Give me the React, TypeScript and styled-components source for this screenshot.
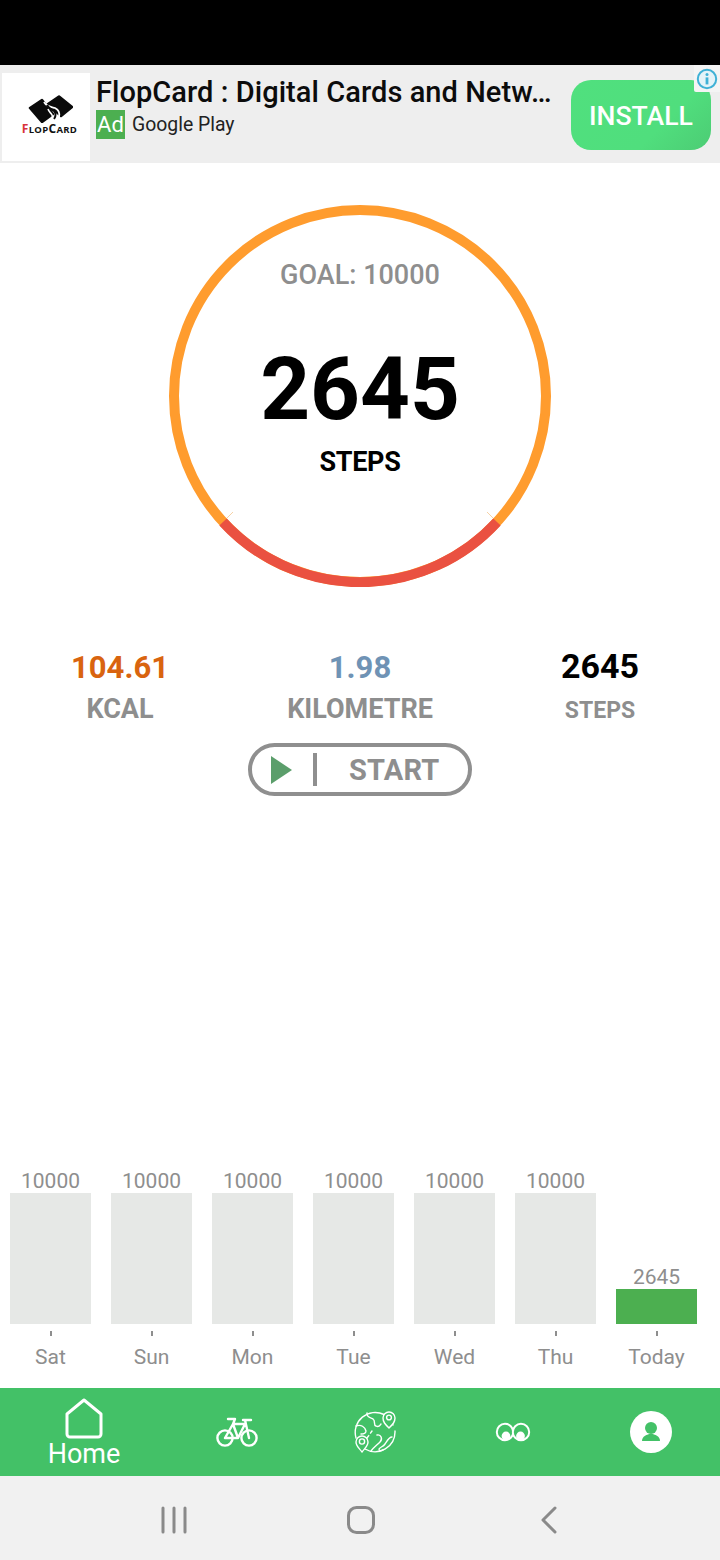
import React from "react";
import styled, { createGlobalStyle } from "styled-components";

const Global = createGlobalStyle`
  html, body { margin: 0; padding: 0; background: #fff; }
  * { box-sizing: border-box; }
  body { font-family: Roboto, "Liberation Sans", sans-serif; }
`;

const Screen = styled.div`
  width: 720px;
  height: 1560px;
  display: flex;
  flex-direction: column;
  overflow: hidden;
  background: #fff;
`;

const StatusBar = styled.div`
  height: 65px;
  flex: none;
  background: #000;
`;

const AdBanner = styled.div`
  position: relative;
  height: 98px;
  flex: none;
  display: flex;
  align-items: flex-start;
  background: #eeeeee;
  padding: 8px 9px 0 2px;
`;

const AdLogo = styled.div`
  width: 88px;
  height: 88px;
  flex: none;
  background: #fff;
  display: flex;
  flex-direction: column;
  align-items: center;
  padding: 22px 0 0 7px;
`;

const LogoWord = styled.div`
  font-family: "Open Sans", "Liberation Sans", sans-serif;
  font-weight: 700;
  font-size: 12px;
  line-height: 12px;
  letter-spacing: 0.3px;
  color: #111;
  margin-top: 0;
  white-space: nowrap;
  small { font-size: 9.5px; }
  b { color: #d8323c; font-weight: 700; }
`;

const AdText = styled.div`
  width: 475px;
  flex: none;
  padding-left: 6px;
`;

const AdTitle = styled.div`
  font-size: 29px;
  font-weight: 500;
  line-height: 38px;
  letter-spacing: 0.06px;
  color: #0c0c0c;
  white-space: nowrap;
`;

const AdMeta = styled.div`
  display: flex;
  align-items: center;
  margin-top: -1px;
  gap: 7px;
`;

const AdBadge = styled.span`
  width: 29px;
  height: 29px;
  background: #4caf50;
  color: #fff;
  font-size: 22px;
  line-height: 29px;
  text-align: center;
`;

const AdSource = styled.span`
  font-size: 19.4px;
  line-height: 29px;
  color: #222;
`;

const InstallButton = styled.div`
  width: 140px;
  height: 70px;
  margin-top: 7px;
  margin-left: auto;
  border-radius: 20px;
  background: linear-gradient(135deg, #50e07e 0%, #50de7d 65%, #4ccc74 100%);
  color: #fff;
  font-size: 26.6px;
  font-weight: 500;
  line-height: 72px;
  text-align: center;
`;

const InfoCorner = styled.div`
  position: absolute;
  top: 0;
  right: 0;
  width: 26px;
  height: 27px;
  background: #f4f4f4;
  border-bottom-left-radius: 2px;
  display: flex;
  align-items: center;
  justify-content: center;
`;

const RingWrap = styled.div`
  position: relative;
  width: 382px;
  height: 382px;
  flex: none;
  margin: 42px auto 0;
  display: flex;
  flex-direction: column;
  align-items: center;
`;

const RingArt = styled.svg`
  position: absolute;
  inset: 0;
`;

const GoalLabel = styled.div`
  margin-top: 54px;
  font-size: 27px;
  line-height: 32px;
  font-weight: 500;
  color: #8e8e8e;
`;

const StepCount = styled.div`
  margin-top: 46px;
  font-size: 87px;
  line-height: 104px;
  font-weight: 700;
  color: #000;
`;

const StepUnit = styled.div`
  margin-top: 5px;
  font-size: 27px;
  line-height: 32px;
  font-weight: 700;
  letter-spacing: -0.3px;
  color: #000;
`;

const Stats = styled.div`
  display: grid;
  grid-template-columns: repeat(3, 240px);
  margin-top: 60px;
  flex: none;
`;

const Stat = styled.div`
  display: flex;
  flex-direction: column;
  align-items: center;
`;

const StatValue = styled.div<{ $color: string; $size: number; $box: number; $line: number }>`
  height: ${(p) => p.$box}px;
  font-size: ${(p) => p.$size}px;
  line-height: ${(p) => p.$line}px;
  font-weight: 700;
  color: ${(p) => p.$color};
`;

const StatLabel = styled.div<{ $size: number }>`
  height: 42px;
  font-size: ${(p) => p.$size}px;
  line-height: 42px;
  font-weight: 700;
  color: #8e8e8e;
`;

const StartButton = styled.div`
  width: 224px;
  height: 53px;
  flex: none;
  margin: 11px auto 0;
  border: 4px solid #8f8f8f;
  border-radius: 27px;
  display: flex;
  align-items: center;
  padding-left: 19px;
`;

const PlayIcon = styled.svg`
  width: 22px;
  height: 30px;
  flex: none;
`;

const Divider = styled.span`
  width: 4px;
  height: 33px;
  margin-left: 20px;
  flex: none;
  background: #8f8f8f;
`;

const StartLabel = styled.span`
  margin-left: 32px;
  font-size: 29px;
  font-weight: 700;
  color: #8e8e8e;
  letter-spacing: 0.2px;
`;

const Chart = styled.div`
  margin-top: auto;
  height: 224px;
  flex: none;
  display: grid;
  grid-template-columns: repeat(7, 81px);
  column-gap: 20px;
  padding-left: 10px;
`;

const Day = styled.div`
  display: flex;
  flex-direction: column;
  align-items: center;
`;

const Plot = styled.div`
  height: 160px;
  width: 100%;
  display: flex;
  flex-direction: column;
  justify-content: flex-end;
  align-items: center;
`;

const BarValue = styled.div`
  font-size: 21px;
  line-height: 26px;
  color: #8e8e8e;
  position: relative;
  top: 1px;
`;

const Bar = styled.div<{ $color: string }>`
  width: 100%;
  background: ${(p) => p.$color};
`;

const Tick = styled.span`
  width: 2px;
  height: 5px;
  margin-top: 7px;
  background: #8e8e8e;
`;

const DayLabel = styled.div`
  margin-top: 7px;
  font-size: 21px;
  line-height: 28px;
  color: #8e8e8e;
`;

const TabBar = styled.div`
  height: 88px;
  flex: none;
  background: #43c167;
  display: grid;
  grid-template-columns: 168px repeat(4, 138px);
`;

const Tab = styled.div`
  display: flex;
  flex-direction: column;
  align-items: center;
  justify-content: center;
  color: #fff;
`;

const HomeTab = styled(Tab)`
  justify-content: flex-start;
  padding-top: 10px;
`;

const TabLabel = styled.div`
  font-size: 27px;
  line-height: 30px;
  color: #fff;
`;

const SystemNav = styled.div`
  height: 84px;
  flex: none;
  background: #f1f1f1;
  display: grid;
  grid-template-columns: repeat(3, 187.5px);
  padding: 4px 0 0 80px;
  align-items: center;
  justify-items: center;
`;

const days = [
  { day: "Sat", value: 10000 },
  { day: "Sun", value: 10000 },
  { day: "Mon", value: 10000 },
  { day: "Tue", value: 10000 },
  { day: "Wed", value: 10000 },
  { day: "Thu", value: 10000 },
  { day: "Today", value: 2645 },
];

export default function App() {
  return (
    <Screen>
      <Global />
      <StatusBar />

      <AdBanner>
        <AdLogo>
          <svg width="46" height="28" viewBox="0 0 46 28">
            <path d="M3 13 L15 5 L26 19 L15 27 Z" fill="#0b0b0b" stroke="#0b0b0b" strokeWidth="2.5" strokeLinejoin="round" />
            <path d="M21 9 L32 1.5 L45 12 L34 21 Z" fill="#0b0b0b" stroke="#0b0b0b" strokeWidth="2.5" strokeLinejoin="round" />
            <path d="M17 7 C20 12 24 12 28 13 C32 15 33 18 32 22" fill="none" stroke="#fff" strokeWidth="1.8" />
            <path d="M20 10 C22 14 25 15 27 16 C29 18 29 21 27 24" fill="none" stroke="#0b0b0b" strokeWidth="2" />
            <path d="M21 14 C22 17 24 18 25 20 C26 22 25 25 23 27" fill="none" stroke="#fff" strokeWidth="1.6" />
          </svg>
          <LogoWord>
            <b>F</b>
            <small>LOP</small>C<small>ARD</small>
          </LogoWord>
        </AdLogo>
        <AdText>
          <AdTitle>FlopCard : Digital Cards and Netw…</AdTitle>
          <AdMeta>
            <AdBadge>Ad</AdBadge>
            <AdSource>Google Play</AdSource>
          </AdMeta>
        </AdText>
        <InstallButton>INSTALL</InstallButton>
        <InfoCorner>
          <svg width="22" height="22" viewBox="0 0 22 22">
            <circle cx="11" cy="11" r="9.2" fill="#e4f3f8" stroke="#3fb1d6" strokeWidth="2" />
            <circle cx="11" cy="6.6" r="1.5" fill="#3fb1d6" />
            <rect x="9.6" y="9.4" width="2.8" height="7" fill="#3fb1d6" />
          </svg>
        </InfoCorner>
      </AdBanner>

      <RingWrap>
        <RingArt width="382" height="382" viewBox="0 0 382 382">
          <circle cx="191" cy="191" r="186" fill="none" stroke="#ff9c2e" strokeWidth="10" />
          <path d="M 54 317 A 186 186 0 0 0 328 317" fill="none" stroke="#ea5141" strokeWidth="10" />
          <path d="M 58 313 L 64 307 M 324 313 L 318 307" stroke="#f6d2a6" strokeWidth="1" />
        </RingArt>
        <GoalLabel>GOAL: 10000</GoalLabel>
        <StepCount>2645</StepCount>
        <StepUnit>STEPS</StepUnit>
      </RingWrap>

      <Stats>
        <Stat>
          <StatValue $color="#d9640f" $size={31} $box={41} $line={42}>104.61</StatValue>
          <StatLabel $size={27}>KCAL</StatLabel>
        </Stat>
        <Stat>
          <StatValue $color="#6f93b5" $size={31} $box={41} $line={42}>1.98</StatValue>
          <StatLabel $size={27}>KILOMETRE</StatLabel>
        </Stat>
        <Stat>
          <StatValue $color="#000" $size={34} $box={43} $line={38}>2645</StatValue>
          <StatLabel $size={23}>STEPS</StatLabel>
        </Stat>
      </Stats>

      <StartButton>
        <PlayIcon viewBox="0 0 22 30">
          <path d="M0 1 L21 15 L0 29 Z" fill="#5b9e6b" />
        </PlayIcon>
        <Divider />
        <StartLabel>START</StartLabel>
      </StartButton>

      <Chart>
        {days.map((d) => (
          <Day key={d.day}>
            <Plot>
              <BarValue>{d.value}</BarValue>
              <Bar
                $color={d.value >= 10000 ? "#e6e8e6" : "#4caf50"}
                style={{ height: d.value >= 10000 ? 131 : 35 }}
              />
            </Plot>
            <Tick />
            <DayLabel>{d.day}</DayLabel>
          </Day>
        ))}
      </Chart>

      <TabBar>
        <HomeTab>
          <svg width="38" height="41" viewBox="0 0 38 41">
            <path
              d="M19 2 L36 16 V36 a3 3 0 0 1 -3 3 H5 a3 3 0 0 1 -3 -3 V16 Z"
              fill="none"
              stroke="#fff"
              strokeWidth="3"
              strokeLinejoin="round"
            />
          </svg>
          <TabLabel>Home</TabLabel>
        </HomeTab>
        <Tab>
          <svg width="44" height="32" viewBox="0 0 44 32" fill="none" stroke="#fff" strokeWidth="2.4" strokeLinecap="round" strokeLinejoin="round">
            <circle cx="10" cy="22" r="7.6" />
            <circle cx="34" cy="22" r="7.6" />
            <path d="M10 22 L18 8 L23 22 H10 M18 8 H30 L23 22 M13 3 H20 L18 8 M28 4 H36 M30 4 L34 22" />
          </svg>
        </Tab>
        <Tab>
          <svg width="44" height="44" viewBox="0 0 44 44" fill="none" stroke="#fff" strokeWidth="1.4" strokeLinecap="round" strokeLinejoin="round">
            <path d="M31 4.5 A20 20 0 0 1 40 15 M42 21 A20 20 0 0 1 12 39 M3 28 A20 20 0 0 1 31 4.5" />
            <path d="M14 3 C13 7 18 8 20 9 C23 11 20 15 23 16 C26 18 27 15 28 14" />
            <path d="M3 16 C8 14 12 17 13 21 C13 24 10 24 8 24" />
            <path d="M24 25 C28 24 30 29 27 32 C24 35 21 37 18 41" />
            <path d="M39 27 C36 27 34 31 32 34 C30 37 27 37 26 39 C26 41 28 41 30 40" />
            <path d="M14 28 L19 21" strokeDasharray="3 3" />
            <path d="M36 18 C32 14 30 12 30 8 A6 6 0 0 1 42 8 C42 12 40 14 36 18 Z" fill="#43c167" />
            <circle cx="36" cy="7.5" r="2.4" />
            <path d="M9 42 C6 38 3 36 3 32 A6 6 0 0 1 15 32 C15 36 12 38 9 42 Z" fill="#43c167" />
            <circle cx="9" cy="31.5" r="2.6" />
          </svg>
        </Tab>
        <Tab>
          <svg width="36" height="22" viewBox="0 0 36 22">
            <circle cx="10" cy="11" r="8.2" fill="none" stroke="#fff" strokeWidth="2" />
            <circle cx="26" cy="11" r="8.2" fill="#43c167" stroke="#fff" strokeWidth="2" />
            <circle cx="11" cy="15" r="4.4" fill="#fff" />
            <circle cx="25.5" cy="15" r="4.4" fill="#fff" />
          </svg>
        </Tab>
        <Tab>
          <svg width="42" height="42" viewBox="0 0 42 42">
            <circle cx="21" cy="21" r="21" fill="#fff" />
            <circle cx="21" cy="17" r="6" fill="#43c167" />
            <path d="M12 30 c0-5 5-6 7-7 h4 c2 1 7 2 7 7 Z" fill="#43c167" />
          </svg>
        </Tab>
      </TabBar>

      <SystemNav>
        <svg width="26" height="28" viewBox="0 0 26 28">
          <path d="M2 2 V26 M13 2 V26 M24 2 V26" stroke="#8a8a8a" strokeWidth="3" strokeLinecap="round" />
        </svg>
        <svg width="28" height="28" viewBox="0 0 28 28">
          <rect x="1.5" y="1.5" width="25" height="25" rx="8" fill="none" stroke="#8a8a8a" strokeWidth="3" />
        </svg>
        <svg width="17" height="28" viewBox="0 0 17 28">
          <path d="M15 2 L3 14 L15 26" fill="none" stroke="#8a8a8a" strokeWidth="3" strokeLinecap="round" strokeLinejoin="round" />
        </svg>
      </SystemNav>
    </Screen>
  );
}
